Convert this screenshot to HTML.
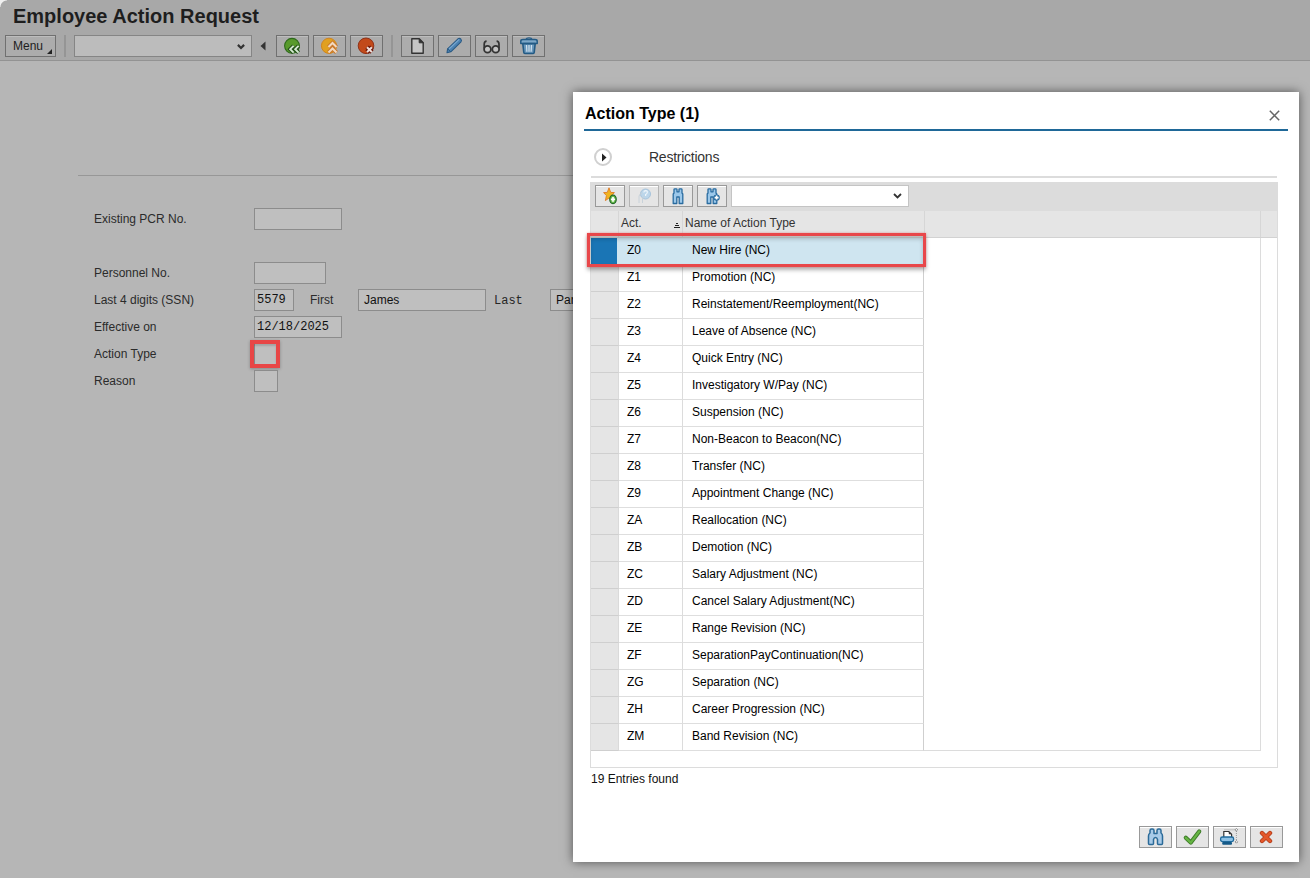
<!DOCTYPE html>
<html><head><meta charset="utf-8">
<style>
*{box-sizing:border-box;margin:0;padding:0}
html,body{width:1310px;height:878px;overflow:hidden}
body{position:relative;background:#b6b6b6;font-family:"Liberation Sans",sans-serif;font-size:12px;color:#2b2b2b}
.a{position:absolute}
svg{position:absolute;overflow:visible}
.t{position:absolute;white-space:nowrap;line-height:12px}
.tb{position:absolute;height:22px;border:1px solid #707070;background:#acacac;box-shadow:inset 0 1px 0 #bdbdbd}
.sep{position:absolute;width:2px;background:#959595}
.inp{position:absolute;height:22px;border:1px solid #8c8c8c;background:#bfbfbf}
.mono{font-family:"Liberation Mono",monospace;color:#111}
#dlg{position:absolute;left:573px;top:92px;width:726px;height:770px;background:#fff;box-shadow:0 0 10px rgba(0,0,0,.55)}
.d{position:absolute}
.dt{position:absolute;white-space:nowrap;line-height:12px;color:#000}
.btn{position:absolute;height:22px;border:1px solid #999;background:#e5e5e5;box-shadow:inset 0 1px 0 #fff}
.r{position:absolute;left:18px;width:334px;height:27px;color:#000}
.r div{position:absolute;top:0;height:27px;line-height:12px;white-space:nowrap}
.c0{left:0;width:28px;background:#e5e5e5;border-bottom:1px solid #cfcfcf;border-right:1px solid #dadada}
.c1{left:28px;width:64px;border-right:1px solid #dcdcdc;border-bottom:1px solid #dedede;padding:6px 0 0 8px}
.c2{left:92px;width:241px;border-right:1px solid #cfcfcf;border-bottom:1px solid #dedede;padding:6px 0 0 9px}
.sel .c0{background:#1a75b5;border-right:2px solid #cfe5f0;border-bottom-color:#1a75b5}
.sel .c1,.sel .c2{background:#cfe5f0;border-right-color:#cfe5f0}
</style></head><body>
<div class="a" style="left:0;top:0;width:1310px;height:60px;background:#a8a8a8"></div>
<!-- window corner -->
<div class="a" style="left:0;top:0;width:7px;height:7px;background:radial-gradient(circle at 7px 7px,#a8a8a8 6px,#f0f0f0 7px)"></div>
<!-- title -->
<div class="t" style="left:13px;top:6px;font-size:20px;line-height:20px;font-weight:bold;color:#1e1e1e">Employee Action Request</div>

<!-- toolbar -->
<div class="tb" style="left:5px;top:35px;width:51px"></div>
<div class="t" style="left:13px;top:40px;color:#1e1e1e">Menu</div>
<svg style="left:47px;top:49px" width="6" height="6"><path d="M5 0 L5 5 L0 5 Z" fill="#222"/></svg>
<div class="sep" style="left:64px;top:35px;height:22px"></div>
<div class="inp" style="left:74px;top:35px;width:178px;background:#bcbcbc;border-color:#858585"></div>
<svg style="left:237px;top:44px" width="9" height="6"><path d="M0.9 0.9 L4 4 L7.1 0.9" fill="none" stroke="#333" stroke-width="2.2"/></svg>
<svg style="left:260px;top:41px" width="6" height="10"><path d="M5.5 0.5 L0.5 5 L5.5 9.5 Z" fill="#333"/></svg>

<div class="tb" style="left:276px;top:35px;width:33px"></div>
<svg style="left:283px;top:37px" width="20" height="18" viewBox="0 0 20 18">
  <circle cx="9" cy="8.8" r="7.4" fill="#589a2c" stroke="#2f6a1c" stroke-width="1.1"/>
  <path d="M10.6 8.8 L7.2 12.2 L10.6 15.6 M15.6 8.8 L12.2 12.2 L15.6 15.6" fill="none" stroke="#24501a" stroke-width="4"/>
  <path d="M10.6 8.8 L7.2 12.2 L10.6 15.6 M15.6 8.8 L12.2 12.2 L15.6 15.6" fill="none" stroke="#d4ead0" stroke-width="1.9"/>
</svg>
<div class="tb" style="left:313px;top:35px;width:33px"></div>
<svg style="left:320px;top:37px" width="20" height="18" viewBox="0 0 20 18">
  <circle cx="9" cy="8.8" r="7.6" fill="#e0a020" stroke="#d08018" stroke-width="0.9"/>
  <path d="M8.5 10 L12.5 6 L16.5 10 M8.5 15.5 L12.5 11.5 L16.5 15.5" fill="none" stroke="#c9782a" stroke-width="4" />
  <path d="M8.5 10 L12.5 6 L16.5 10 M8.5 15.5 L12.5 11.5 L16.5 15.5" fill="none" stroke="#f2d9c0" stroke-width="2"/>
</svg>
<div class="tb" style="left:350px;top:35px;width:33px"></div>
<svg style="left:357px;top:37px" width="20" height="18" viewBox="0 0 20 18">
  <circle cx="9" cy="8.8" r="7.8" fill="#c24a1a" stroke="#8a2a12" stroke-width="0.9"/>
  <path d="M10 10.2 L14.9 15.1 M14.9 10.2 L10 15.1" fill="none" stroke="#6e1c0e" stroke-width="4.6"/>
  <path d="M10 10.2 L14.9 15.1 M14.9 10.2 L10 15.1" fill="none" stroke="#f0e0dc" stroke-width="2"/>
</svg>
<div class="sep" style="left:391px;top:35px;height:22px"></div>
<div class="tb" style="left:401px;top:35px;width:33px"></div>
<svg style="left:410px;top:37px" width="16" height="18" viewBox="0 0 16 18">
  <path d="M1.8 1.8 L9.2 1.8 L13.2 5.8 L13.2 16.2 L1.8 16.2 Z" fill="#c6c6c6" stroke="#333" stroke-width="1.4" stroke-linejoin="round"/>
  <path d="M9.2 1.8 L13.2 5.8 L9.2 5.8 Z" fill="#333" stroke="#333" stroke-width="1" stroke-linejoin="round"/>
</svg>
<div class="tb" style="left:438px;top:35px;width:33px"></div>
<svg style="left:444px;top:37px" width="20" height="18" viewBox="0 0 20 18">
  <path d="M3 15.8 L3.6 11.8 L14 1.8 Q15.4 0.8 16.8 2 Q18 3.4 17 4.8 L6.8 14.8 Z" fill="#4c82b2" stroke="#2a5a84" stroke-width="1.1" stroke-linejoin="round"/>
  <path d="M5 12 L15.2 2.4" stroke="#7aa8d0" stroke-width="1.1"/>
  <path d="M3.6 11.8 L6.8 14.8" stroke="#2a5a84" stroke-width="1"/>
</svg>
<div class="tb" style="left:475px;top:35px;width:33px"></div>
<svg style="left:482px;top:39px" width="20" height="16" viewBox="0 0 20 16">
  <path d="M2.2 9.5 L2.2 5 Q2.4 2.4 4.6 2.2 M17 9.5 L17 5 Q16.8 2.4 14.6 2.2" fill="none" stroke="#333" stroke-width="1.7"/>
  <circle cx="5.5" cy="10.3" r="3.4" fill="#c4c4c4" stroke="#333" stroke-width="1.8"/>
  <circle cx="13.7" cy="10.3" r="3.4" fill="#c4c4c4" stroke="#333" stroke-width="1.8"/>
</svg>
<div class="tb" style="left:512px;top:35px;width:33px"></div>
<svg style="left:519px;top:37px" width="20" height="18" viewBox="0 0 20 18">
  <path d="M7.2 2.6 Q7.2 0.8 10 0.8 Q12.8 0.8 12.8 2.6" fill="none" stroke="#2a5f88" stroke-width="1.3"/>
  <path d="M1.8 4.2 Q1.8 2.6 4 2.6 L16 2.6 Q18.2 2.6 18.2 4.2 L18.2 6.4 L1.8 6.4 Z" fill="#7ea8c8" stroke="#235a84" stroke-width="1.5" stroke-linejoin="round"/>
  <path d="M3.8 6.6 L4.8 15.3 Q5 16.5 6.4 16.5 L13.6 16.5 Q15 16.5 15.2 15.3 L16.2 6.6 Z" fill="#6a98bc" stroke="#235a84" stroke-width="1.6" stroke-linejoin="round"/>
  <path d="M7.5 8 L7.9 14.8 M10 8 L10 14.8 M12.5 8 L12.1 14.8" stroke="#d0e0ec" stroke-width="1.2"/>
</svg>
<div class="a" style="left:0;top:60px;width:1310px;height:1px;background:#939393"></div>

<!-- form -->
<div class="a" style="left:78px;top:175px;width:500px;height:1px;background:#979797"></div>
<div class="t" style="left:94px;top:213px">Existing PCR No.</div>
<div class="inp" style="left:254px;top:208px;width:88px"></div>
<div class="t" style="left:94px;top:267px">Personnel No.</div>
<div class="inp" style="left:254px;top:262px;width:72px"></div>
<div class="t" style="left:94px;top:294px">Last 4 digits (SSN)</div>
<div class="inp" style="left:254px;top:289px;width:40px"></div>
<div class="t mono" style="left:257px;top:294px">5579</div>
<div class="t" style="left:310px;top:294px">First</div>
<div class="inp" style="left:358px;top:289px;width:128px"></div>
<div class="t" style="left:364px;top:294px;color:#111">James</div>
<div class="t mono" style="left:494px;top:295px;color:#262626">Last</div>
<div class="inp" style="left:550px;top:289px;width:60px"></div>
<div class="t" style="left:556px;top:294px;color:#111">Par</div>
<div class="t" style="left:94px;top:321px">Effective on</div>
<div class="inp" style="left:254px;top:316px;width:88px"></div>
<div class="t mono" style="left:257px;top:321px">12/18/2025</div>
<div class="t" style="left:94px;top:348px">Action Type</div>
<div class="inp" style="left:254px;top:343px;width:24px"></div>
<div class="a" style="left:250px;top:340px;width:30px;height:28px;border:4px solid #e84646;box-shadow:0 1px 3px rgba(0,0,0,.25), inset 0 2px 2px rgba(0,0,0,.15)"></div>
<div class="t" style="left:94px;top:375px">Reason</div>
<div class="inp" style="left:254px;top:370px;width:24px"></div>
<!-- dialog -->
<div id="dlg">
  <div class="dt" style="left:12px;top:14px;font-size:16px;line-height:16px;font-weight:bold">Action Type (1)</div>
  <svg style="left:696px;top:18px" width="11" height="11"><path d="M0.8 0.8 L10.2 10.2 M10.2 0.8 L0.8 10.2" stroke="#666" stroke-width="1.5"/></svg>
  <div class="d" style="left:11px;top:37px;width:704px;height:2px;background:#1f6898"></div>
  <div class="d" style="left:21px;top:56px;width:18px;height:18px;border:2px solid #d0d0d0;border-radius:50%"></div>
  <svg style="left:28px;top:61px" width="6" height="9"><path d="M1 0.5 L5.5 4.5 L1 8.5 Z" fill="#222"/></svg>
  <div class="dt" style="left:76px;top:58px;font-size:14px;line-height:14px;letter-spacing:-0.25px;color:#333">Restrictions</div>
  <div class="d" style="left:18px;top:84px;width:686px;height:2px;background:#dcdcdc"></div>
  <!-- table box -->
  <div class="d" style="left:17px;top:90px;width:688px;height:586px;border:1px solid #dcdcdc;border-top:0"></div>
  <div class="d" style="left:17px;top:90px;width:688px;height:29px;background:#dcdcdc"></div>
  <div class="btn" style="left:22px;top:93px;width:30px"></div>
  <svg style="left:29px;top:95px" width="16" height="17" viewBox="0 0 16 17">
    <path d="M7 0.8 L8.7 5.4 L12.4 5.6 L9.6 8.6 L10.6 13.6 L7 11 L3.4 13.6 L4.4 8.6 L1.6 5.6 L5.3 5.4 Z" fill="#f0b41e" stroke="#e07a24" stroke-width="0.9" stroke-linejoin="round"/>
    <ellipse cx="11" cy="12.4" rx="3.2" ry="4.2" fill="#6cbf50" stroke="#256a2a" stroke-width="1.3"/>
    <path d="M11 10 L11 14.8 M8.9 12.4 L13.1 12.4" stroke="#fff" stroke-width="1.7"/>
  </svg>
  <div class="btn" style="left:56px;top:93px;width:30px;border-color:#b4b4b4"></div>
  <svg style="left:62px;top:95px" width="18" height="17" viewBox="0 0 18 17">
    <circle cx="10.5" cy="7" r="5" fill="#bcd6ea" stroke="#a8c4dc" stroke-width="1"/>
    <path d="M8.8 5.5 Q9 3.6 10.7 3.6 Q12.5 3.8 12.3 5.5 Q12 7 10.6 7.5 L10.6 9" fill="none" stroke="#eef5fb" stroke-width="1.2"/>
    <path d="M4 16 L4 9 Q5 6.5 7 6 M7.5 16 L7.5 11 Q8.5 9.5 9.5 9.5" fill="none" stroke="#c8d2da" stroke-width="1"/>
  </svg>
  <div class="btn" style="left:90px;top:93px;width:30px"></div>
  <svg style="left:99px;top:96px" width="12" height="17" viewBox="0 0 12 17">
    <path d="M1.2 15.5 L1.2 6 L2 5 L2 1.6 Q2 0.8 2.8 0.8 L4.2 0.8 Q5 0.8 5 1.6 L5 3.8 L7 3.8 L7 1.6 Q7 0.8 7.8 0.8 L9.2 0.8 Q10 0.8 10 1.6 L10 5 L10.8 6 L10.8 15.5 L7.2 15.5 L7.2 9 L4.8 9 L4.8 15.5 Z" fill="#9cc8ea" stroke="#2a6ca0" stroke-width="1.3" stroke-linejoin="round"/>
  </svg>
  <div class="btn" style="left:124px;top:93px;width:30px"></div>
  <svg style="left:133px;top:96px" width="14" height="17" viewBox="0 0 14 17">
    <path d="M1.2 15.5 L1.2 6 L2 5 L2 1.6 Q2 0.8 2.8 0.8 L4.2 0.8 Q5 0.8 5 1.6 L5 3.8 L7 3.8 L7 1.6 Q7 0.8 7.8 0.8 L9.2 0.8 Q10 0.8 10 1.6 L10 5 L10.8 6 L10.8 15.5 L7.2 15.5 L7.2 9 L4.8 9 L4.8 15.5 Z" fill="#9cc8ea" stroke="#2a6ca0" stroke-width="1.3" stroke-linejoin="round"/>
    <circle cx="10.6" cy="9.6" r="3.2" fill="#2a6ca0"/>
    <path d="M10.6 7.6 L10.6 11.6 M8.6 9.6 L12.6 9.6" stroke="#fff" stroke-width="1.6"/>
  </svg>
  <div class="d" style="left:158px;top:93px;width:178px;height:22px;background:#fff;border:1px solid #c4c4c4"></div>
  <svg style="left:320px;top:101px" width="9" height="6"><path d="M1 1 L4.5 4.5 L8 1" fill="none" stroke="#333" stroke-width="1.8"/></svg>
  <!-- header -->
  <div class="d" style="left:18px;top:119px;width:686px;height:27px;background:#e5e5e5;border-bottom:1px solid #d2d2d2"></div>
  <div class="d" style="left:45px;top:119px;width:1px;height:26px;background:#d6d6d6"></div>
  <div class="d" style="left:109px;top:119px;width:1px;height:26px;background:#d6d6d6"></div>
  <div class="d" style="left:351px;top:119px;width:1px;height:26px;background:#d6d6d6"></div>
  <div class="d" style="left:687px;top:119px;width:1px;height:26px;background:#d6d6d6"></div>
  <div class="dt" style="left:48px;top:125px;color:#333">Act.</div>
  <svg style="left:101px;top:131px" width="7" height="6"><rect x="2" y="0" width="2" height="1" fill="#222"/><rect x="1" y="2" width="4" height="1" fill="#222"/><rect x="0" y="4" width="6" height="1" fill="#222"/></svg>
  <div class="dt" style="left:112px;top:125px;color:#333">Name of Action Type</div>
  <!-- inner grid borders -->
  <div class="d" style="left:687px;top:146px;width:1px;height:513px;background:#dcdcdc"></div>
  <div class="d" style="left:18px;top:658px;width:670px;height:1px;background:#dcdcdc"></div>
<div class="r sel" style="top:146px"><div class="c0"></div><div class="c1">Z0</div><div class="c2">New Hire (NC)</div></div>
<div class="r" style="top:173px"><div class="c0"></div><div class="c1">Z1</div><div class="c2">Promotion (NC)</div></div>
<div class="r" style="top:200px"><div class="c0"></div><div class="c1">Z2</div><div class="c2">Reinstatement/Reemployment(NC)</div></div>
<div class="r" style="top:227px"><div class="c0"></div><div class="c1">Z3</div><div class="c2">Leave of Absence (NC)</div></div>
<div class="r" style="top:254px"><div class="c0"></div><div class="c1">Z4</div><div class="c2">Quick Entry (NC)</div></div>
<div class="r" style="top:281px"><div class="c0"></div><div class="c1">Z5</div><div class="c2">Investigatory W/Pay (NC)</div></div>
<div class="r" style="top:308px"><div class="c0"></div><div class="c1">Z6</div><div class="c2">Suspension (NC)</div></div>
<div class="r" style="top:335px"><div class="c0"></div><div class="c1">Z7</div><div class="c2">Non-Beacon to Beacon(NC)</div></div>
<div class="r" style="top:362px"><div class="c0"></div><div class="c1">Z8</div><div class="c2">Transfer (NC)</div></div>
<div class="r" style="top:389px"><div class="c0"></div><div class="c1">Z9</div><div class="c2">Appointment Change (NC)</div></div>
<div class="r" style="top:416px"><div class="c0"></div><div class="c1">ZA</div><div class="c2">Reallocation (NC)</div></div>
<div class="r" style="top:443px"><div class="c0"></div><div class="c1">ZB</div><div class="c2">Demotion (NC)</div></div>
<div class="r" style="top:470px"><div class="c0"></div><div class="c1">ZC</div><div class="c2">Salary Adjustment (NC)</div></div>
<div class="r" style="top:497px"><div class="c0"></div><div class="c1">ZD</div><div class="c2">Cancel Salary Adjustment(NC)</div></div>
<div class="r" style="top:524px"><div class="c0"></div><div class="c1">ZE</div><div class="c2">Range Revision (NC)</div></div>
<div class="r" style="top:551px"><div class="c0"></div><div class="c1">ZF</div><div class="c2">SeparationPayContinuation(NC)</div></div>
<div class="r" style="top:578px"><div class="c0"></div><div class="c1">ZG</div><div class="c2">Separation (NC)</div></div>
<div class="r" style="top:605px"><div class="c0"></div><div class="c1">ZH</div><div class="c2">Career Progression (NC)</div></div>
<div class="r" style="top:632px"><div class="c0"></div><div class="c1">ZM</div><div class="c2">Band Revision (NC)</div></div>
  <div class="d" style="left:14px;top:141px;width:339px;height:34px;border:3px solid #e8474a;box-shadow:0 0 2px rgba(240,80,80,.5), 0 3px 4px rgba(0,0,0,.3), inset 0 3px 4px rgba(0,0,0,.2)"></div>
  <div class="dt" style="left:18px;top:681px;color:#111">19 Entries found</div>
  <!-- bottom buttons -->
  <div class="btn" style="left:566px;top:734px;width:33px"></div>
  <svg style="left:574px;top:736px" width="17" height="18" viewBox="0 0 17 18">
    <path d="M1.5 15.5 L1.5 8 Q1.5 6 3 5 L3 2.5 Q3 1 4.5 1 L5.5 1 Q7 1 7 2.5 L7 5.5 L10 5.5 L10 2.5 Q10 1 11.5 1 L12.5 1 Q14 1 14 2.5 L14 5 Q15.5 6 15.5 8 L15.5 15.5 Q15.5 16.5 14.5 16.5 L11.5 16.5 Q10.5 16.5 10.5 15.5 L10.5 11.5 Q10 9.5 8.5 9.5 Q7 9.5 6.5 11.5 L6.5 15.5 Q6.5 16.5 5.5 16.5 L2.5 16.5 Q1.5 16.5 1.5 15.5 Z" fill="#a8cbe8" stroke="#2a6a98" stroke-width="1.5" stroke-linejoin="round"/>
  </svg>
  <div class="btn" style="left:603px;top:734px;width:33px"></div>
  <svg style="left:610px;top:736px" width="19" height="18" viewBox="0 0 19 18">
    <path d="M2.8 9.8 L7.8 14.6 L16.2 3.4" fill="none" stroke="#3c7a28" stroke-width="4.2" stroke-linecap="round" stroke-linejoin="round"/>
    <path d="M2.8 9.8 L7.8 14.6 L16.2 3.4" fill="none" stroke="#66b444" stroke-width="2.4" stroke-linecap="round" stroke-linejoin="round"/>
  </svg>
  <div class="btn" style="left:640px;top:734px;width:33px"></div>
  <svg style="left:646px;top:736px" width="20" height="18" viewBox="0 0 20 18">
    <path d="M4.8 9.5 L4.8 3.5 L9.8 3.5 L12.6 6.3 L12.6 9.5" fill="#fff" stroke="#333" stroke-width="1.2"/>
    <path d="M9.8 3.5 L12.6 6.3 L9.8 6.3 Z" fill="#333"/>
    <rect x="1.6" y="9" width="13" height="4.6" rx="1.8" fill="#8cc0e4" stroke="#1f6a9c" stroke-width="1.3"/>
    <rect x="3.2" y="14" width="9.8" height="2.8" rx="1" fill="#145a88"/>
    <path d="M5.5 1.8 L17.4 1.8 M17.4 3 L17.4 13" fill="none" stroke="#666" stroke-width="0.6" stroke-dasharray="1 1"/>
    <rect x="16.5" y="0.9" width="1.8" height="1.8" fill="#fff" stroke="#555" stroke-width="0.6" transform="rotate(45 17.4 1.8)"/>
    <rect x="16.5" y="13" width="1.8" height="1.8" fill="#fff" stroke="#555" stroke-width="0.6" transform="rotate(45 17.4 13.9)"/>
  </svg>
  <div class="btn" style="left:677px;top:734px;width:33px"></div>
  <svg style="left:685px;top:737px" width="16" height="16" viewBox="0 0 16 16">
    <path d="M4 4 L12 12 M12 4 L4 12" stroke="#b03c1a" stroke-width="4.4" stroke-linecap="round"/>
    <path d="M4 4 L12 12 M12 4 L4 12" stroke="#e4572a" stroke-width="2.8" stroke-linecap="round"/>
  </svg>
</div>
</body></html>
